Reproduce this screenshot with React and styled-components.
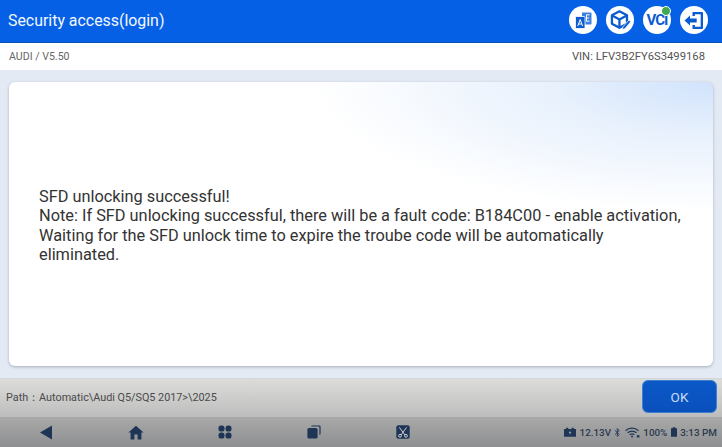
import React from "react";
import styled, { createGlobalStyle } from "styled-components";

const Global = createGlobalStyle`
  html, body { margin: 0; padding: 0; }
  body { font-family: Roboto, "Liberation Sans", sans-serif; }
`;

const Page = styled.div`
  width: 722px;
  height: 447px;
  display: flex;
  flex-direction: column;
  overflow: hidden;
  background: #e4eaf4;
`;

const Header = styled.header`
  height: 43px;
  flex: none;
  display: flex;
  align-items: center;
  justify-content: space-between;
  padding: 0 14px 2px 8px;
  box-sizing: border-box;
  background: #0560e6;
  border-bottom: 1px solid #0b52b8;
`;

const Title = styled.h1`
  margin: 0;
  font-size: 15.9px;
  font-weight: 400;
  color: #f2f7ff;
`;

const HeaderIcons = styled.div`
  display: flex;
  align-items: center;
  gap: 9px;
`;

const RoundIcon = styled.div`
  width: 28px;
  height: 28px;
  border-radius: 50%;
  background: #fff;
  display: flex;
  align-items: center;
  justify-content: center;
  position: relative;
`;

const VciText = styled.span`
  font-size: 15px;
  font-weight: 700;
  letter-spacing: -0.9px;
  color: #0b5bd0;
`;

const Badge = styled.span`
  position: absolute;
  top: 0;
  right: 0;
  width: 10px;
  height: 10px;
  border-radius: 50%;
  background: #3fa94f;
  border: 1px solid #fff;
  box-sizing: border-box;
`;

const SubBar = styled.div`
  height: 27px;
  flex: none;
  display: flex;
  align-items: center;
  justify-content: space-between;
  padding: 0 17px 1px 9px;
  box-sizing: border-box;
  background: #fff;
  color: #666;
`;

const Version = styled.span`
  font-size: 10.6px;
`;

const Vin = styled.span`
  font-size: 11.26px;
  color: #555;
`;

const Content = styled.main`
  flex: 1;
  padding: 12px 9px;
  display: flex;
  background: #e4eaf4;
  border-bottom: 1px solid #d2d6dd;
`;

const Card = styled.section`
  flex: 1;
  display: flex;
  align-items: center;
  padding: 3px 30px 0;
  border-radius: 6px;
  background:
    radial-gradient(ellipse 400px 130px at 100% 0, #d0e3fc 0%, rgba(226, 237, 252, 0.8) 40%, rgba(255, 255, 255, 0) 100%),
    #fff;
  box-shadow: 0 1px 3px rgba(90, 100, 120, 0.45);
`;

const Message = styled.p`
  margin: 0;
  font-size: 16.33px;
  line-height: 19.4px;
  color: #333;
`;

const PathBar = styled.div`
  height: 38px;
  flex: none;
  display: flex;
  align-items: center;
  justify-content: space-between;
  padding: 0 5px 0 6px;
  background: linear-gradient(#dcdcda, #bdbdbd);
`;

const PathText = styled.span`
  font-size: 10.8px;
  color: #4a4a4a;
`;

const OkButton = styled.button`
  width: 75px;
  height: 33px;
  margin-bottom: 3px;
  border: 1px solid #3f7fd0;
  border-radius: 6px;
  background: linear-gradient(#0a58c8, #0a50bc);
  color: #c9dcf5;
  font: 400 13.5px Roboto, sans-serif;
`;

const NavBar = styled.nav`
  height: 30px;
  flex: none;
  display: flex;
  align-items: center;
  justify-content: space-between;
  padding: 0 5px 0 0;
  background: linear-gradient(#a9a9a9, #8e8f91);
`;

const NavIcons = styled.div`
  display: flex;
  align-items: center;
  gap: 74.7px;
  padding-left: 39px;
`;

const Status = styled.div`
  display: flex;
  align-items: center;
  gap: 3.4px;
  font-size: 9.9px;
  font-weight: 500;
  color: #2c3a50;
`;

const dark = "#1f3556";
const blue = "#0b5bd0";

const TranslateIcon = () => (
  <svg width="19" height="19" viewBox="0 0 19 19">
    <path d="M8 1.5h8.5a1 1 0 0 1 1 1v10a1 1 0 0 1-1 1H8z" fill="#3b82e0" />
    <rect x="1.5" y="5.5" width="9.5" height="12" rx="1" fill={blue} stroke="#fff" strokeWidth="0.8" />
    <path d="M3.8 15 6.2 8.5 8.6 15M4.7 13h3" fill="none" stroke="#fff" strokeWidth="1" />
    <path d="M15.5 3.8h-3v6.4h3M12.5 7h2.6" fill="none" stroke="#fff" strokeWidth="1" />
  </svg>
);

const BoxIcon = () => (
  <svg width="23" height="23" viewBox="0 0 22 22">
    <path d="M10 2.2 17.2 6v8L10 18l-7.2-4V6z" fill="none" stroke={blue} strokeWidth="2.2" strokeLinejoin="round" />
    <path d="M3 6.2 10 10l7-3.8M10 10v7.6" fill="none" stroke={blue} strokeWidth="2.2" />
    <path d="M13.2 17.2 19 10.6l1.8 1.6-5.6 6.6-2.6.8z" fill={blue} stroke="#fff" strokeWidth="0.7" />
  </svg>
);

const ExitIcon = () => (
  <svg width="22" height="19" viewBox="0 0 21 19">
    <path d="M9 1h9.5a1 1 0 0 1 1 1v15a1 1 0 0 1-1 1H9v-4h2.4v1.8h5.8V3.2h-5.8V5H9z" fill={blue} />
    <path d="M1 9.5 6.5 4.6v2.8h6.7v4.2H6.5v2.8z" fill={blue} />
  </svg>
);

const BackIcon = () => (
  <svg width="14" height="15" viewBox="0 0 14 15">
    <path d="M13 .5v14L1 7.5z" fill={dark} />
  </svg>
);

const HomeIcon = () => (
  <svg width="16" height="15" viewBox="0 0 16 15">
    <path d="M8 .8 .4 7.6h2.2V14.4h3.8V9.6h3.2v4.8h3.8V7.6h2.2z" fill={dark} />
  </svg>
);

const AppsIcon = () => (
  <svg width="14" height="14" viewBox="0 0 14 14">
    <rect x="0.5" y="0.5" width="6" height="6" rx="2.6" fill={dark} />
    <rect x="7.5" y="0.5" width="6" height="6" rx="2.6" fill={dark} />
    <rect x="0.5" y="7.5" width="6" height="6" rx="2.6" fill={dark} />
    <rect x="7.5" y="7.5" width="6" height="6" rx="2.6" fill={dark} />
  </svg>
);

const CopiesIcon = () => (
  <svg width="14" height="14" viewBox="0 0 14 14">
    <path d="M4 1.6A1.4 1.4 0 0 1 5.4.4h7a1.2 1.2 0 0 1 1.2 1.2v7a1.4 1.4 0 0 1-1.2 1.4V2.4a.8.8 0 0 0-.8-.8z" fill={dark} />
    <rect x="0.4" y="3" width="10.2" height="10.6" rx="1.6" fill={dark} />
  </svg>
);

const ScissorsIcon = () => (
  <svg width="14" height="14" viewBox="0 0 14 14">
    <rect x="0.3" y="0.3" width="13.4" height="13.4" rx="2" fill={dark} />
    <path d="M3.4 2.4 9 10M10.6 2.4 5 10" stroke="#c9ccd1" strokeWidth="1" fill="none" />
    <circle cx="4" cy="10.8" r="1.4" fill="none" stroke="#c9ccd1" strokeWidth="1" />
    <circle cx="10" cy="10.8" r="1.4" fill="none" stroke="#c9ccd1" strokeWidth="1" />
  </svg>
);

const BatteryCarIcon = () => (
  <svg width="12" height="10" viewBox="0 0 14 11">
    <path d="M0 2h2.5V.5h2.5V2h4V.5h2.5V2H14v9H0z" fill={dark} />
    <path d="M7.6 3.4 5.4 6.8h1.6l-.6 2.4 2.2-3.4H7z" fill="#a9abae" />
  </svg>
);

const BluetoothIcon = () => (
  <svg width="7" height="11" viewBox="0 0 8 11">
    <path d="M1 3l5 4.6L3.8 10V1L6 3.4 1 8" fill="none" stroke={dark} strokeWidth="1" />
  </svg>
);

const WifiIcon = () => (
  <svg width="15" height="11" viewBox="0 0 16 11">
    <path d="M.6 3.6a10 10 0 0 1 13.8 0M2.8 5.8a7 7 0 0 1 9.4 0M5 8a4 4 0 0 1 5 0" fill="none" stroke={dark} strokeWidth="1.2" />
    <circle cx="7.5" cy="9.8" r="1" fill={dark} />
    <rect x="12.6" y="8.4" width="2.8" height="2.4" fill={dark} />
  </svg>
);

const BatteryIcon = () => (
  <svg width="6" height="10" viewBox="0 0 7 11">
    <path d="M2 0h3v1h2v10H0V1h2z" fill={dark} />
  </svg>
);

const App = () => {
  return (
    <Page>
      <Global />
      <Header>
        <Title>Security access(login)</Title>
        <HeaderIcons>
          <RoundIcon>
            <TranslateIcon />
          </RoundIcon>
          <RoundIcon>
            <BoxIcon />
          </RoundIcon>
          <RoundIcon>
            <VciText>VCI</VciText>
            <Badge />
          </RoundIcon>
          <RoundIcon>
            <ExitIcon />
          </RoundIcon>
        </HeaderIcons>
      </Header>
      <SubBar>
        <Version>AUDI / V5.50</Version>
        <Vin>VIN: LFV3B2FY6S3499168</Vin>
      </SubBar>
      <Content>
        <Card>
          <Message>
            SFD unlocking successful!
            <br />
            Note: If SFD unlocking successful, there will be a fault code: B184C00 - enable activation,
            <br />
            Waiting for the SFD unlock time to expire the troube code will be automatically
            <br />
            eliminated.
          </Message>
        </Card>
      </Content>
      <PathBar>
        <PathText>Path：Automatic\Audi Q5/SQ5 2017&gt;\2025</PathText>
        <OkButton>OK</OkButton>
      </PathBar>
      <NavBar>
        <NavIcons>
          <BackIcon />
          <HomeIcon />
          <AppsIcon />
          <CopiesIcon />
          <ScissorsIcon />
        </NavIcons>
        <Status>
          <BatteryCarIcon />
          <span>12.13V</span>
          <BluetoothIcon />
          <WifiIcon />
          <span>100%</span>
          <BatteryIcon />
          <span>3:13 PM</span>
        </Status>
      </NavBar>
    </Page>
  );
};

export default App;
